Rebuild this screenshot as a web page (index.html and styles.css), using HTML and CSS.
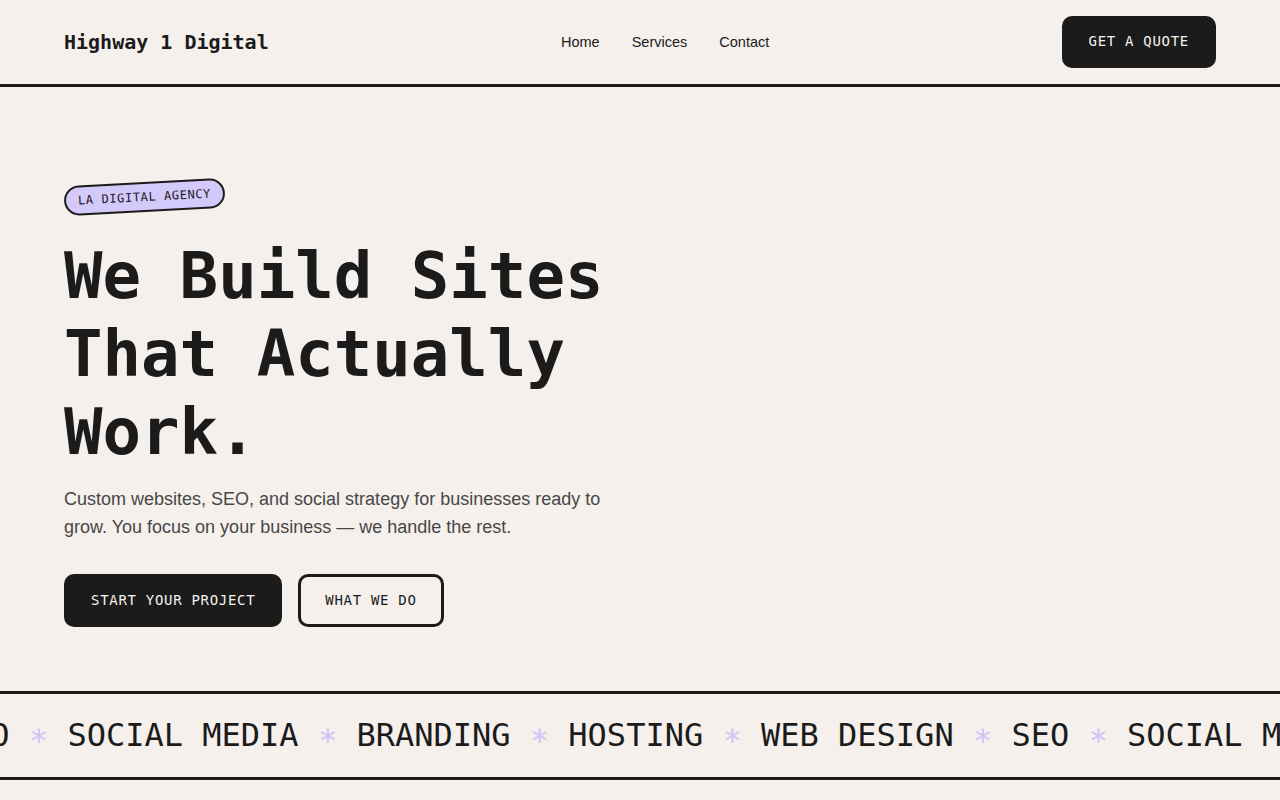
FILE: index.html
```html
<!DOCTYPE html>
<html lang="en">
<head>
  <meta charset="UTF-8">
  <meta name="viewport" content="width=device-width, initial-scale=1.0">
  <title>Highway 1 Digital</title>
  <link rel="stylesheet" href="styles.css">
</head>
<body>
  <header class="site-header">
    <a class="logo" href="#">Highway 1 Digital</a>
    <nav class="nav">
      <a href="#">Home</a>
      <a href="#">Services</a>
      <a href="#">Contact</a>
    </nav>
    <a class="btn btn-dark btn-quote" href="#">GET A QUOTE</a>
  </header>

  <section class="hero">
    <span class="badge">LA DIGITAL AGENCY</span>
    <h1>We Build Sites That Actually Work.</h1>
    <p class="lead">Custom websites, SEO, and social strategy for businesses ready to grow. You focus on your business — we handle the rest.</p>
    <div class="actions">
      <a class="btn btn-dark" href="#">START YOUR PROJECT</a>
      <a class="btn btn-outline" href="#">WHAT WE DO</a>
    </div>
  </section>

  <!-- Services ticker -->
  <div class="ticker">
    <div class="ticker-track">
      <span>WEB DESIGN</span><span class="star">∗</span>
      <span>SEO</span><span class="star">∗</span>
      <span>SOCIAL MEDIA</span><span class="star">∗</span>
      <span>BRANDING</span><span class="star">∗</span>
      <span>HOSTING</span><span class="star">∗</span>
      <span>WEB DESIGN</span><span class="star">∗</span>
      <span>SEO</span><span class="star">∗</span>
      <span>SOCIAL MEDIA</span><span class="star">∗</span>
      <span>BRANDING</span><span class="star">∗</span>
      <span>HOSTING</span><span class="star">∗</span>
    </div>
  </div>
</body>
</html>
```

FILE: styles.css
```css
body {
  margin: 0;
  background-color: #f5f0ec;
  color: #1b1b1b;
  font-family: "Liberation Sans", Arial, sans-serif;
}

a {
  color: inherit;
  text-decoration: none;
}

.site-header {
  display: flex;
  align-items: center;
  justify-content: space-between;
  height: 84px;
  padding: 0 64px;
  border-bottom: 3px solid #1b1b1b;
}

.logo {
  font-family: "DejaVu Sans Mono", monospace;
  font-weight: bold;
  font-size: 20px;
}

.nav {
  display: flex;
  gap: 32px;
  font-size: 14.5px;
}

.btn {
  display: inline-block;
  font-family: "DejaVu Sans Mono", monospace;
  font-size: 14px;
  line-height: 17px;
  letter-spacing: 0.05em;
  padding: 15px 24px;
  border: 3px solid #1b1b1b;
  border-radius: 10px;
}

.btn-dark {
  background-color: #1b1b1b;
  color: #f5f0ec;
}

.btn-quote {
  padding-top: 14px;
  padding-bottom: 15px;
}

.btn-outline {
  background-color: transparent;
}

.hero {
  padding: 95px 64px 64px;
}

.badge {
  display: inline-block;
  font-family: "DejaVu Sans Mono", monospace;
  font-size: 12px;
  letter-spacing: 0.05em;
  line-height: 16px;
  padding: 5px 12px;
  background-color: #d4c9fb;
  border: 2px solid #1b1b1b;
  border-radius: 999px;
  transform: rotate(-3deg);
}

h1 {
  font-family: "DejaVu Sans Mono", monospace;
  font-size: 64px;
  line-height: 78px;
  font-weight: bold;
  max-width: 600px;
  margin: 25px 0 14px;
}

.lead {
  font-size: 18px;
  line-height: 28px;
  color: #474747;
  max-width: 560px;
  margin: 0 0 33px;
}

.actions {
  display: flex;
  gap: 16px;
}

.ticker {
  overflow: hidden;
  border-top: 3px solid #1b1b1b;
  border-bottom: 3px solid #1b1b1b;
  padding: 21px 0 22px;
}

.ticker-track {
  display: flex;
  gap: 1ch;
  white-space: nowrap;
  font-family: "DejaVu Sans Mono", monospace;
  font-size: 32px;
  line-height: 40px;
  /* frozen scroll position */
  transform: translateX(-15.5ch);
}

.star {
  color: #cfc3f7;
}
```
